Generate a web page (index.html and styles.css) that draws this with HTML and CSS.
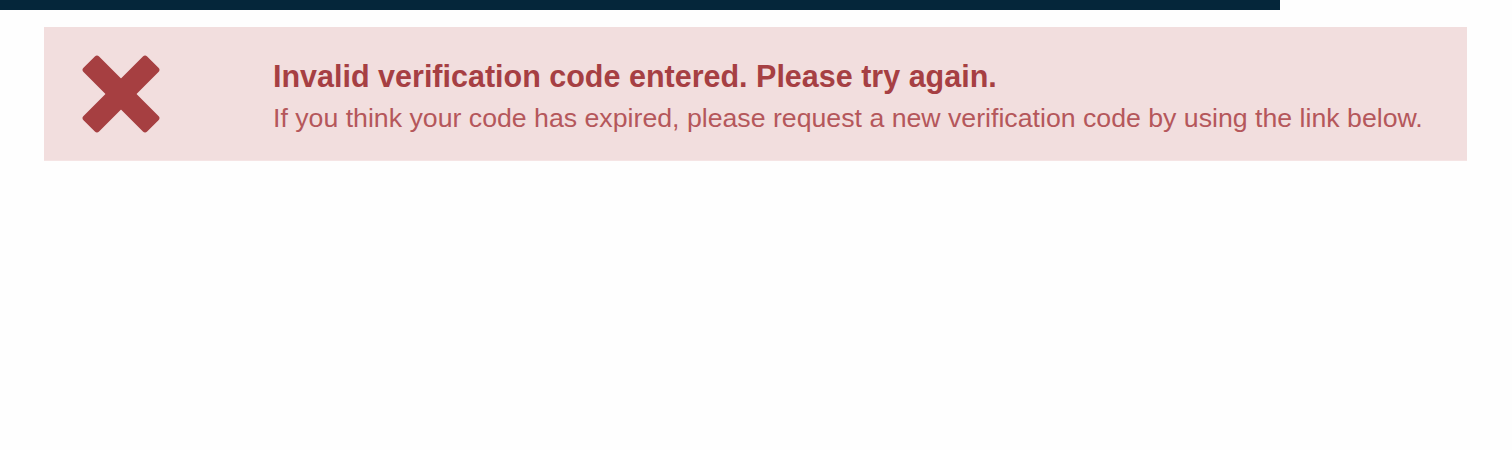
FILE: index.html
```html
<!DOCTYPE html>
<html lang="en">
<head>
    <meta charset="UTF-8">
    <meta name="viewport" content="width=device-width, initial-scale=1.0">
    <title>Verification</title>
    <link rel="stylesheet" href="styles.css">
</head>
<body>
    <div class="top-bar"></div>
    <div class="alert alert-danger">
        <div class="alert-icon">
            <svg width="80" height="80" viewBox="0 0 80 80">
                <g transform="rotate(45 40 40)" fill="#a63f41">
                    <rect x="-5" y="29" width="90" height="22" rx="3"/>
                    <rect x="29" y="-5" width="22" height="90" rx="3"/>
                </g>
            </svg>
        </div>
        <div class="alert-text">
            <h2 class="alert-title">Invalid verification code entered. Please try again.</h2>
            <p class="alert-body">If you think your code has expired, please request a new verification code by using the link below.</p>
        </div>
    </div>
</body>
</html>
```

FILE: styles.css
```css
body {
    font-family: 'Liberation Sans', Arial, sans-serif;
    background-color: #fefefe;
    margin: 0;
}
.top-bar {
    width: 1280px;
    height: 10px;
    background-color: #05263a;
}
.alert {
    display: flex;
    margin: 17px 45px 0 44px;
    height: 134px;
    box-sizing: border-box;
    background-color: #f2dede;
    border-bottom: 1px solid #f5e4e4;
}
.alert-icon {
    width: 229px;
    display: flex;
    align-items: center;
    justify-content: center;
}
.alert-icon svg {
    display: block;
    margin-left: -76px;
}
.alert-text {
    padding-top: 31px;
}
.alert-title {
    margin: 0;
    font-size: 30.5px;
    font-weight: bold;
    color: #a63f43;
    line-height: 36px;
}
.alert-body {
    margin: 6px 0 0;
    font-size: 26.7px;
    color: #b5575b;
    line-height: 36px;
}
```
